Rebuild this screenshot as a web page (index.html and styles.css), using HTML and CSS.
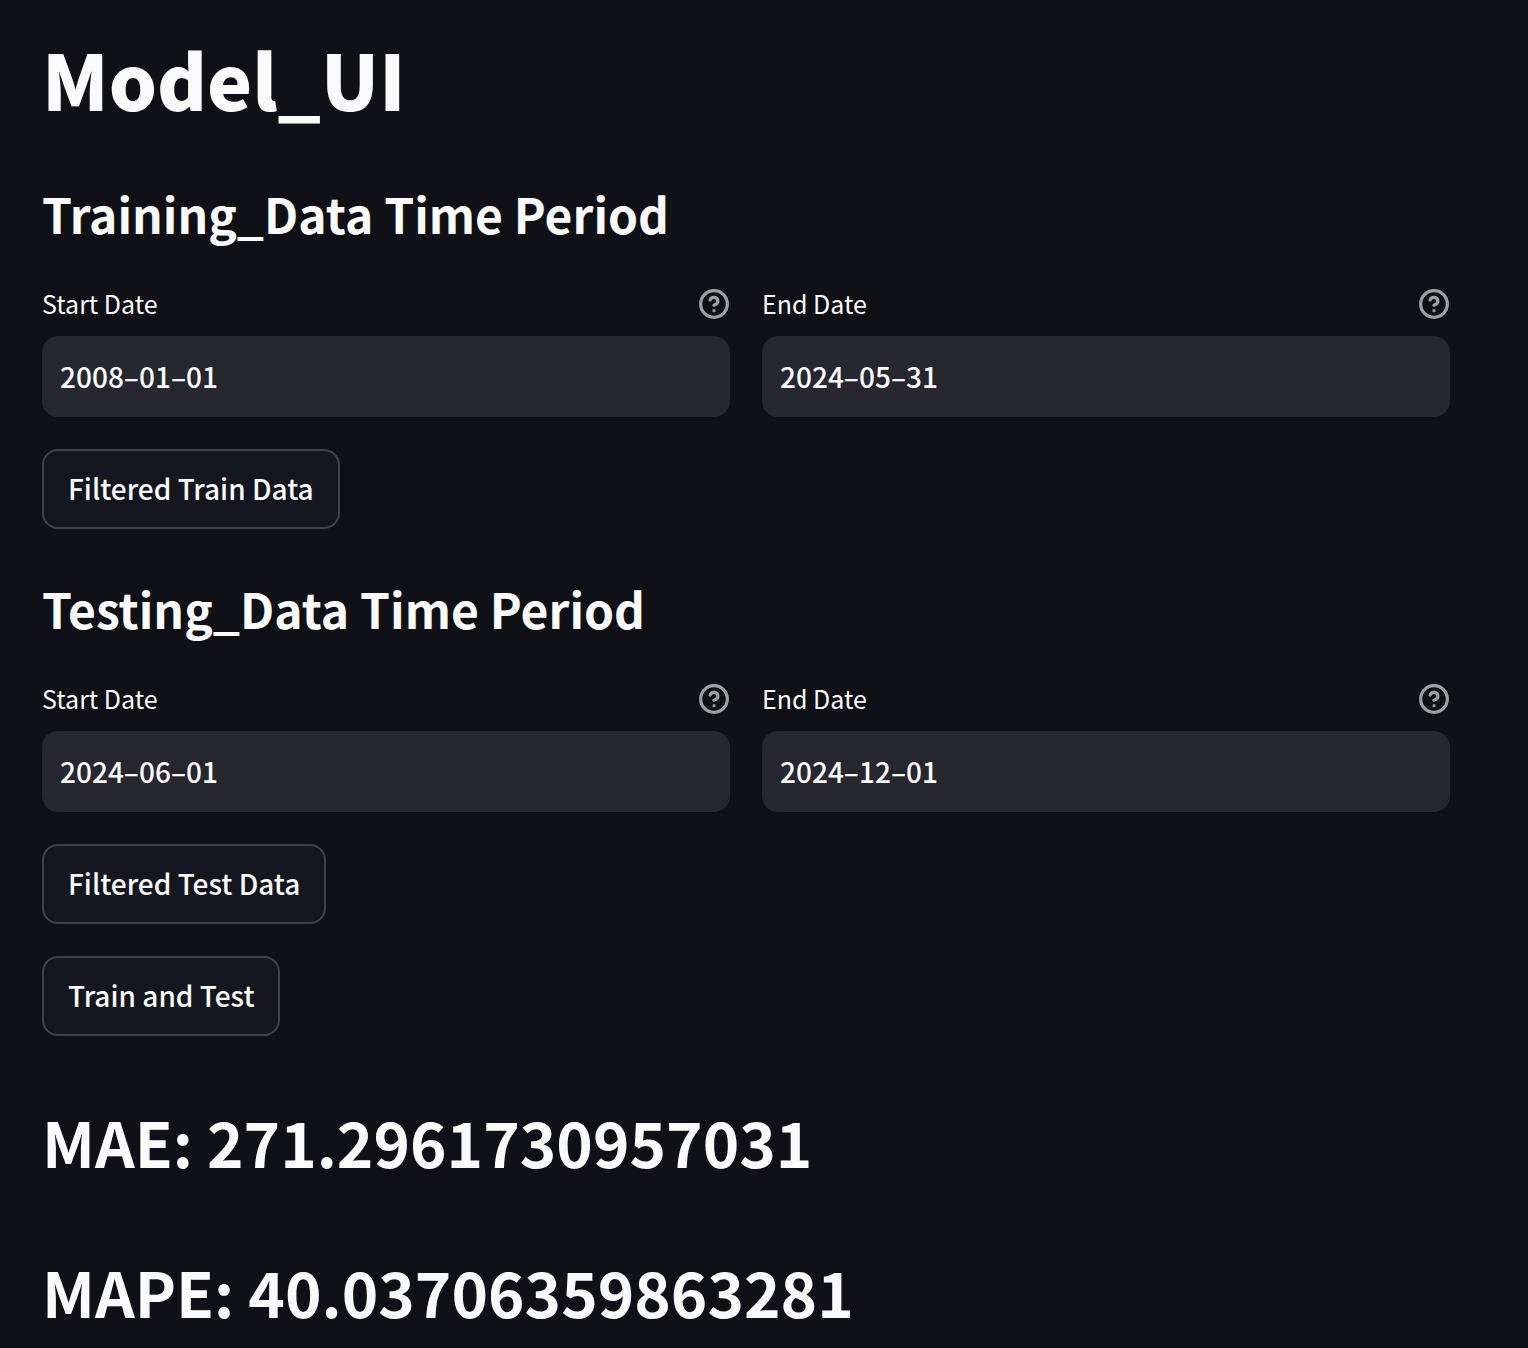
FILE: index.html
```html
<!DOCTYPE html>
<html lang="en">
<head>
<meta charset="utf-8">
<title>Model_UI</title>
<link rel="stylesheet" href="styles.css">
</head>
<body>
<svg class="sprite" aria-hidden="true">
  <symbol id="help" viewBox="0 0 24 24">
    <circle cx="12" cy="12" r="10"/>
    <path d="M9.09 9a3 3 0 0 1 5.83 1c0 2-3 3-3 3"/>
    <path d="M12 17h.01"/>
  </symbol>
</svg>
<main class="page">
  <h1 class="title">Model_UI</h1>
  <section class="period">
    <h3 class="heading">Training_Data Time Period</h3>
    <div class="fields">
      <div class="field">
        <div class="field-top"><label for="train-start">Start Date</label><svg class="help"><use href="#help"/></svg></div>
        <input class="input" id="train-start" type="text" value="2008–01–01">
      </div>
      <div class="field">
        <div class="field-top"><label for="train-end">End Date</label><svg class="help"><use href="#help"/></svg></div>
        <input class="input" id="train-end" type="text" value="2024–05–31">
      </div>
    </div>
    <button class="button" type="button">Filtered Train Data</button>
  </section>
  <section class="period">
    <h3 class="heading">Testing_Data Time Period</h3>
    <div class="fields">
      <div class="field">
        <div class="field-top"><label for="test-start">Start Date</label><svg class="help"><use href="#help"/></svg></div>
        <input class="input" id="test-start" type="text" value="2024–06–01">
      </div>
      <div class="field">
        <div class="field-top"><label for="test-end">End Date</label><svg class="help"><use href="#help"/></svg></div>
        <input class="input" id="test-end" type="text" value="2024–12–01">
      </div>
    </div>
    <button class="button" type="button">Filtered Test Data</button>
    <button class="button" type="button">Train and Test</button>
  </section>
  <section class="results">
    <h2 class="metric">MAE: 271.2961730957031</h2>
    <h2 class="metric">MAPE: 40.03706359863281</h2>
  </section>
</main>
</body>
</html>
```
FILE: styles.css
```css
* {
  box-sizing: border-box;
}

body {
  margin: 0;
  background: #101116;
  color: #fafafa;
  font-family: "Noto Sans CJK SC", "Noto Sans", sans-serif;
  font-weight: 500;
}

.sprite {
  display: none;
}

.page {
  padding: 22px 78px 0 42px;
}

h1, h2, h3 {
  margin: 0;
}

.title {
  font-size: 76px;
  line-height: 112px;
  font-weight: 900;
}

.period {
  display: flex;
  flex-direction: column;
  align-items: flex-start;
  gap: 32px;
  padding-top: 44px;
}

.heading {
  font-size: 48px;
  line-height: 70px;
  font-weight: 700;
}

.fields {
  display: grid;
  grid-template-columns: 1fr 1fr;
  gap: 32px;
  width: 100%;
}

.field {
  display: flex;
  flex-direction: column;
  gap: 8px;
}

.field-top {
  display: flex;
  align-items: center;
  justify-content: space-between;
  height: 48px;
  font-size: 25px;
  font-weight: 400;
  line-height: 46px;
}

.field-top label {
  padding-bottom: 2px;
}

.help {
  width: 32px;
  height: 32px;
  fill: none;
  stroke: #a0a0a2;
  stroke-width: 2.4;
  stroke-linecap: round;
  stroke-linejoin: round;
}

.input {
  width: 100%;
  height: 81px;
  padding: 0 18px 2px;
  border: 0;
  border-radius: 16px;
  background: #272730;
  color: inherit;
  font: inherit;
  font-size: 28px;
}

.button {
  height: 80px;
  padding: 0 24px 2px;
  border: 2px solid #424348;
  border-radius: 16px;
  background: #14171f;
  color: inherit;
  font: inherit;
  font-size: 28px;
}

.results {
  padding-top: 62px;
}

.metric {
  font-size: 62px;
  line-height: 86px;
  padding-bottom: 64px;
  font-weight: 700;
}

.metric:last-child {
  padding-bottom: 0;
}
```
